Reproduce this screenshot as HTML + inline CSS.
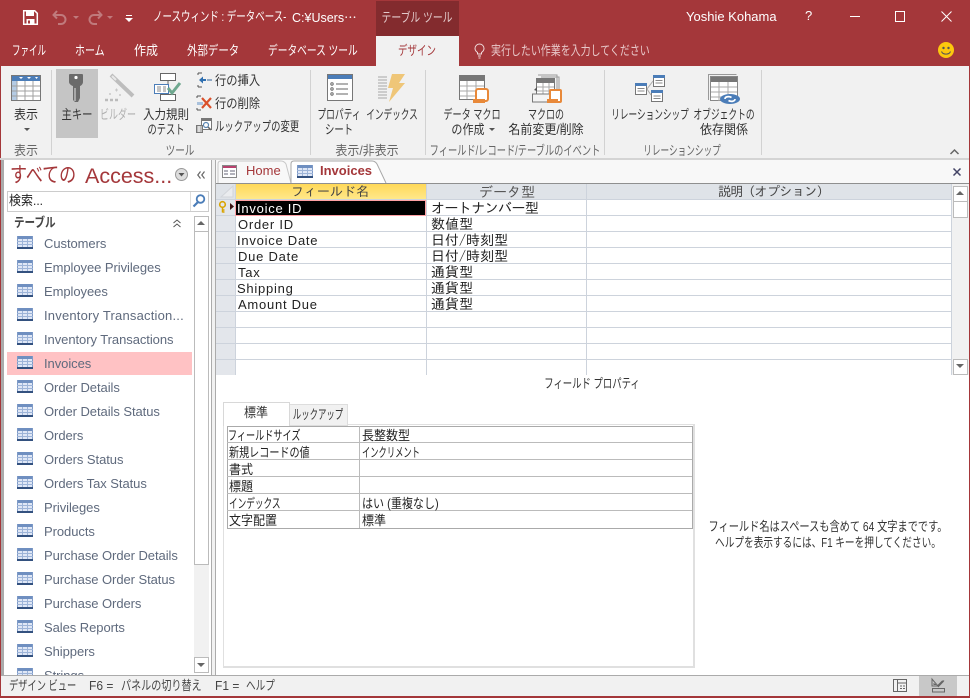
<!DOCTYPE html>
<html lang="ja"><head><meta charset="utf-8">
<style>
html,body{margin:0;padding:0}
body{width:970px;height:698px;position:relative;overflow:hidden;background:#f1f1f1;font-family:"Liberation Sans","Noto Sans CJK JP",sans-serif;font-size:13px;color:#444}
.a{position:absolute}
.t{position:absolute;white-space:nowrap;line-height:16px;transform:scaleX(calc(var(--s,1)*var(--f,.923)));transform-origin:0 0}
.c{text-align:center;transform:translateX(-50%) scaleX(calc(var(--s,1)*var(--f,.923)));transform-origin:50% 0}
.k{color:#333}
.w{color:#fff}
svg{position:absolute;overflow:visible}
.n{position:absolute;left:44px;font-size:13px;line-height:16px;color:#5f6a7d;white-space:nowrap;letter-spacing:-.06px}
.g{position:absolute;font-family:"Liberation Sans",sans-serif;font-size:13px;letter-spacing:.75px;line-height:16px;color:#222;white-space:nowrap}
.j{position:absolute;font-family:"IPAGothic",monospace;font-size:14px;line-height:16px;color:#222;white-space:nowrap}
.p{position:absolute;font-size:13px;line-height:17px;color:#222;white-space:nowrap;transform:scaleX(calc(var(--s,1)*.923));transform-origin:0 0}
.hl{position:absolute;height:1px;background:#cdd3dc}
.vl{position:absolute;width:1px;background:#cdd3dc}
</style></head><body>
<svg width="0" height="0" style="position:absolute"><defs>
<symbol id="tb" viewBox="0 0 16 13"><rect x="0" y="0" width="16" height="13" fill="#dfe7f6"/><rect x="0" y="0" width="16" height="3" fill="#6f8fc0"/><path d="M.5 0v13M15.500 0v13" stroke="#7f9bc8"/><path d="M0 5.500h16M0 8.500h16M5.500 3v8M10.500 3v8" stroke="#9db4d8" fill="none"/><rect x="0" y="11" width="16" height="2" fill="#33517f"/></symbol>
</defs></svg>

<!-- title bar -->
<div class="a" style="left:0;top:0;width:970px;height:66px;background:#a4373a"></div>
<div class="a" style="left:376px;top:1px;width:83px;height:35px;background:#832b2e"></div>
<div class="a" style="left:376px;top:36px;width:83px;height:30px;background:#f1f1f1"></div>
<svg style="left:23px;top:10px" width="15" height="15" viewBox="0 0 15 15"><path d="M.7.7h11l2.600 2.600v11H.7z" fill="none" stroke="#fff" stroke-width="1.500"/><rect x="3" y="1" width="8" height="5" fill="#fff"/><rect x="3.500" y="9" width="8" height="5" fill="#fff"/><rect x="5" y="10.500" width="2" height="3" fill="#a4373a"/></svg>
<svg style="left:52px;top:10px" width="16" height="15" viewBox="0 0 16 15"><path d="M5 1L1.500 5 5 8.500M2 5h7a4.500 4.500 0 0 1 0 9H6" fill="none" stroke="#c07a7c" stroke-width="2"/></svg>
<div class="a" style="left:73px;top:16px;border:3px solid transparent;border-top:3px solid #c07a7c"></div>
<svg style="left:87px;top:10px" width="16" height="15" viewBox="0 0 16 15"><path d="M11 1l3.500 4L11 8.500M14 5H7a4.500 4.500 0 0 0 0 9h3" fill="none" stroke="#c07a7c" stroke-width="2"/></svg>
<div class="a" style="left:107px;top:16px;border:3px solid transparent;border-top:3px solid #c07a7c"></div>
<div class="a" style="left:126px;top:15px;width:6px;height:1px;background:#fff"></div>
<div class="a" style="left:125px;top:18px;border:4px solid transparent;border-top:4px solid #fff;border-bottom:0"></div>
<div class="t w" style="left:153px;top:9px;--s:.79">ノースウィンド : データベース-</div>
<div class="t w" style="left:292px;top:9px;font-size:12.500px;--f:1">C:¥Users<span style="font-family:'Noto Sans CJK JP',sans-serif">…</span></div>
<div class="t c" style="left:417px;top:10px;color:#e2c9ca;--s:.82">テーブル ツール</div>
<div class="t w" style="left:686px;top:9px;font-size:13px;--f:1">Yoshie Kohama</div>
<div class="t w" style="left:805px;top:8px;font-size:13px;--f:1">?</div>
<div class="a" style="left:850px;top:16px;width:10px;height:1px;background:#fff"></div>
<div class="a" style="left:895px;top:11px;width:8px;height:9px;border:1px solid #fff"></div>
<svg style="left:941px;top:11px" width="11" height="11"><path d="M.5.500l10 10M10.500.500l-10 10" stroke="#fff" stroke-width="1"/></svg>

<!-- tabs -->
<div class="t w" style="left:12px;top:43px;--s:.71">ファイル</div>
<div class="t w" style="left:75px;top:43px;--s:.83">ホーム</div>
<div class="t w" style="left:134px;top:43px">作成</div>
<div class="t w" style="left:187px;top:43px;--s:.87">外部データ</div>
<div class="t w" style="left:268px;top:43px;--s:.81">データベース ツール</div>
<div class="t c" style="left:417px;top:43px;color:#a4373a;--s:.79">デザイン</div>
<svg style="left:474px;top:43px" width="11" height="16" viewBox="0 0 11 16"><path d="M3.500 11V9.500C1.500 8 1 7 1 5.500a4.500 4.500 0 0 1 9 0C10 7 9.500 8 7.500 9.500V11zM4 13h3M4.500 15h2" fill="none" stroke="#f0dcdc" stroke-width="1"/></svg>
<div class="t" style="left:491px;top:43px;color:#e8c8c9;--s:.83">実行したい作業を入力してください</div>
<svg style="left:938px;top:42px" width="16" height="16" viewBox="0 0 16 16"><circle cx="8" cy="8" r="8" fill="#fcc80e"/><circle cx="5.500" cy="6" r="1.200" fill="#555"/><circle cx="10.500" cy="6" r="1.200" fill="#555"/><path d="M3.500 9.500c1.500 3.500 7.500 3.500 9 0" fill="none" stroke="#555" stroke-width="1"/></svg>

<!-- ribbon -->
<div class="a" style="left:0;top:66px;width:1px;height:92px;background:#a4373a"></div>
<div class="a" style="left:0;top:158px;width:970px;height:2px;background:#d4d4d4"></div>
<div class="a" style="left:51px;top:70px;width:1px;height:85px;background:#d2d2d2"></div>
<div class="a" style="left:310px;top:70px;width:1px;height:85px;background:#d2d2d2"></div>
<div class="a" style="left:425px;top:70px;width:1px;height:85px;background:#d2d2d2"></div>
<div class="a" style="left:604px;top:70px;width:1px;height:85px;background:#d2d2d2"></div>
<div class="a" style="left:761px;top:70px;width:1px;height:85px;background:#d2d2d2"></div>
<div class="a" style="left:56px;top:69px;width:42px;height:69px;background:#c5c5c5"></div>

<svg style="left:11px;top:75px" width="30" height="26" viewBox="0 0 30 26"><rect x=".5" y=".5" width="29" height="25" fill="#fff" stroke="#777"/><rect x="1" y="1" width="28" height="5" fill="#4b7db8"/><rect x="1" y="6" width="5" height="19" fill="#b4cbe4"/><path d="M6 11h23M6 16h23M6 21h23M1 11h5M1 16h5M1 21h5M6 6v19M14 6v19M22 6v19" stroke="#a0a0a0" fill="none"/><path d="M8 2h4l-2 2zM16 2h4l-2 2zM24 2h3l-1.500 2z" fill="#fff"/></svg>
<div class="t c k" style="left:26px;top:107px">表示</div>
<div class="a" style="left:24px;top:128px;border:3px solid transparent;border-top:3px solid #555;border-bottom:0"></div>
<div class="t c" style="left:26px;top:143px;color:#666">表示</div>

<svg style="left:69px;top:74px" width="14" height="28" viewBox="0 0 14 28"><path d="M1 0h12a1 1 0 0 1 1 1v7c0 2-2 4-3 4v12l-2 4H6l-2-2V12C3 12 0 10 0 8V1a1 1 0 0 1 1-1z" fill="#6b6b6b"/><circle cx="7" cy="3.500" r="1.600" fill="#fff"/><path d="M6 14v13" stroke="#a8a8a8" stroke-width="2"/></svg>
<div class="t c k" style="left:77px;top:107px;--s:.86">主キー</div>

<svg style="left:105px;top:73px" width="30" height="29" viewBox="0 0 30 29"><path d="M6 2l22 21" stroke="#bdbdbd" stroke-width="4"/><path d="M7 3l4 4" stroke="#e8e8e8" stroke-width="2"/><path d="M10 17h3M11.500 15.500v3M4 21h2M5 20v2M14 22h2M15 21v2" stroke="#c8c8c8"/><path d="M0 27h3M5 27h3M10 27h3" stroke="#bbb" stroke-width="2.500"/></svg>
<div class="t c" style="left:118px;top:107px;color:#b0b0b0;--s:.75">ビルダー</div>

<svg style="left:154px;top:73px" width="29" height="29" viewBox="0 0 29 29"><rect x="6.500" y=".5" width="15" height="7" fill="#fff" stroke="#666"/><rect x="6.500" y="21.500" width="15" height="6" fill="#fff" stroke="#666"/><path d="M14 8v3M14 19v3" stroke="#666"/><rect x=".5" y="11.500" width="14" height="9" fill="#fff" stroke="#4b7db8"/><path d="M3 14h4M3 16h4M3 18h4M9 14h3M9 16h3M9 18h3" stroke="#888" fill="none"/><path d="M14 15l4 5 8-10" stroke="#6fa88f" stroke-width="3" fill="none"/></svg>
<div class="t c k" style="left:166px;top:107px;--s:.96">入力規則</div>
<div class="t c k" style="left:166px;top:122px;--s:.77">のテスト</div>

<svg style="left:197px;top:72px" width="15" height="17" viewBox="0 0 15 17"><path d="M1 1h4M1 1v2M1 15h4M1 13v2" stroke="#555" fill="none"/><path d="M2 8l4-3.500V7h3v2H6v2.500z" fill="#2f6fb0"/><rect x="10" y="7" width="5" height="2" fill="#8fa9c6"/></svg>
<div class="t k" style="left:215px;top:73px;--s:.94">行の挿入</div>
<svg style="left:196px;top:95px" width="16" height="17" viewBox="0 0 16 17"><path d="M1 1h4M1 1v2M1 15h4M1 13v2" stroke="#555" fill="none"/><rect x="1" y="7" width="6" height="3" fill="#a9c1dc"/><path d="M6 3l9 10M15 3L6 13" stroke="#d9512c" stroke-width="2.200"/></svg>
<div class="t k" style="left:215px;top:96px;--s:.94">行の削除</div>
<svg style="left:196px;top:118px" width="17" height="16" viewBox="0 0 17 16"><rect x="5.500" y=".5" width="10" height="11" fill="#fff" stroke="#777"/><rect x="6" y="1" width="9" height="2" fill="#777"/><rect x="0" y="7" width="7" height="8" fill="#777"/><path d="M1 9h5M1 11h5M1 13h5M3 8v6" stroke="#fff" fill="none"/><circle cx="10" cy="7" r="2.500" fill="#fff" stroke="#5b87b3" stroke-width="1.200"/><path d="M12 9l3 3" stroke="#666" stroke-width="1.500"/></svg>
<div class="t k" style="left:215px;top:119px;--s:.78">ルックアップの変更</div>
<div class="t c" style="left:180px;top:143px;color:#666;--s:.8">ツール</div>

<svg style="left:327px;top:74px" width="26" height="27" viewBox="0 0 26 27"><rect x=".5" y=".5" width="25" height="26" fill="#fff" stroke="#777"/><rect x="1" y="1" width="24" height="4" fill="#4b7db8"/><path d="M9 10h12M9 15h12M9 20h12" stroke="#666" fill="none"/><circle cx="5" cy="10" r="1.200" fill="none" stroke="#666"/><circle cx="5" cy="15" r="1.200" fill="none" stroke="#666"/><circle cx="5" cy="20" r="1.200" fill="none" stroke="#666"/></svg>
<div class="t c k" style="left:339px;top:107px;--s:.73">プロパティ</div>
<div class="t c k" style="left:339px;top:122px;--s:.78">シート</div>
<svg style="left:378px;top:74px" width="28" height="28" viewBox="0 0 28 28"><path d="M0 3h9M0 6h9M0 9h9M0 12h9M0 15h9M0 18h9M0 21h9M0 24h9" stroke="#a8a8a8" fill="none"/><path d="M14 0h13l-6 9h6L11 28l4-14h-5z" fill="#efc678"/></svg>
<div class="t c k" style="left:392px;top:107px;--s:.72">インデックス</div>
<div class="t c" style="left:367px;top:143px;color:#666">表示/非表示</div>

<svg style="left:459px;top:75px" width="30" height="29" viewBox="0 0 30 29"><rect x=".5" y=".5" width="25" height="24" fill="#fff" stroke="#777"/><rect x="1" y="1" width="24" height="5" fill="#777"/><path d="M1 11h24M1 16h24M1 21h24M8 6v18M17 6v18" stroke="#aaa" fill="none"/><rect x="17" y="14" width="12" height="12" rx="2" fill="#fff" stroke="#e8893a" stroke-width="2"/><rect x="14" y="24" width="12" height="4" fill="#e8893a"/></svg>
<div class="t c k" style="left:472px;top:107px;--s:.76">データ マクロ</div>
<div class="t c k" style="left:468px;top:122px;--s:.92">の作成</div>
<div class="a" style="left:489px;top:128px;border:3px solid transparent;border-top:3px solid #555;border-bottom:0"></div>
<svg style="left:532px;top:74px" width="31" height="30" viewBox="0 0 31 30"><path d="M6 1h19v22M9 3h18v20" fill="none" stroke="#999"/><rect x="4.500" y="4.500" width="18" height="17" fill="#fff" stroke="#777"/><rect x="5" y="5" width="17" height="4" fill="#777"/><path d="M5 13h17M5 17h17M11 9v12M17 9v12" stroke="#aaa" fill="none"/><path d="M.5 20h20v8H.5z" fill="#f4f4f4" stroke="#777"/><path d="M2 16l3-3v4z" fill="#555"/><rect x="18" y="16" width="11" height="12" rx="1" fill="#fff" stroke="#e8893a" stroke-width="2"/><rect x="15" y="25" width="11" height="4" fill="#e8893a"/></svg>
<div class="t c k" style="left:546px;top:107px;--s:.75">マクロの</div>
<div class="t c k" style="left:545.500px;top:122px">名前変更/削除</div>
<div class="t c" style="left:515px;top:143px;color:#666;--s:.77">フィールド/レコード/テーブルのイベント</div>

<svg style="left:635px;top:75px" width="30" height="28" viewBox="0 0 30 28"><g fill="#fff" stroke="#777"><rect x=".5" y="8.500" width="11" height="11"/><rect x="18.500" y=".5" width="11" height="11"/><rect x="16.500" y="15.500" width="11" height="11"/></g><rect x="0" y="8" width="12" height="3" fill="#4b7db8"/><rect x="18" y="0" width="12" height="3" fill="#4b7db8"/><rect x="16" y="15" width="12" height="3" fill="#4b7db8"/><path d="M12 14l6-8M12 14l4 6" stroke="#aaa" fill="none"/><path d="M2.500 13.500h7M2.500 16h7M20.500 5.500h7M20.500 8h7M18.500 21h7M18.500 23.500h7" stroke="#888" fill="none"/></svg>
<div class="t c k" style="left:650px;top:107px;--s:.72">リレーションシップ</div>
<svg style="left:708px;top:74px" width="32" height="30" viewBox="0 0 32 30"><path d="M.5 26V.5h28" fill="none" stroke="#999"/><rect x="2.500" y="2.500" width="27" height="24" fill="#fff" stroke="#888"/><rect x="3" y="3" width="26" height="5" fill="#777"/><path d="M3 13h26M3 18h26M3 23h26M11 8v19M20 8v19" stroke="#aaa" fill="none"/><ellipse cx="22" cy="25" rx="10" ry="5" fill="#4b7db8"/><path d="M17 25c0-2.500 4-3 6.500-1.500M27 25c0 2.500-4 3-6.500 1.500" stroke="#fff" stroke-width="1.700" fill="none"/></svg>
<div class="t c k" style="left:724px;top:107px;--s:.73">オブジェクトの</div>
<div class="t c k" style="left:724px;top:122px">依存関係</div>
<div class="t c" style="left:682px;top:143px;color:#666;--s:.72">リレーションシップ</div>
<svg style="left:950px;top:149px" width="9" height="6"><path d="M.5 5l4-4 4 4" stroke="#666" stroke-width="1.500" fill="none"/></svg>

<!-- nav pane -->
<div class="a" style="left:0;top:160px;width:1px;height:538px;background:#a4373a"></div>
<div class="a" style="left:969px;top:0;width:1px;height:698px;background:#a4373a"></div>
<div class="a" style="left:1px;top:160px;width:3px;height:515px;background:#ababab"></div>
<div class="a" style="left:4px;top:160px;width:207px;height:515px;background:#fff"></div>
<div class="a" style="left:211px;top:160px;width:1px;height:515px;background:#ababab"></div>
<div class="a" style="left:212px;top:160px;width:3px;height:515px;background:#f1f1f1"></div>
<div class="a" style="left:215px;top:160px;width:1px;height:515px;background:#ababab"></div>
<div class="t" style="left:10px;top:164px;font-size:21px;line-height:24px;color:#a4373a;--s:.81;--f:1">すべての</div>
<div class="t" style="left:85px;top:164px;font-size:21.500px;line-height:24px;color:#a4373a;--f:1">Access...</div>
<svg style="left:175px;top:168px" width="13" height="13"><circle cx="6.500" cy="6.500" r="6" fill="#ddd" stroke="#999"/><path d="M3.500 5h6l-3 3.500z" fill="#555"/></svg>
<svg style="left:197px;top:171px" width="8" height="8"><path d="M3.500.5L.8 4l2.700 3.500M7.500.5L4.800 4l2.700 3.500" stroke="#666" stroke-width="1.200" fill="none"/></svg>
<div class="a" style="left:7px;top:191px;width:200px;height:19px;border:1px solid #ccc;background:#fff"></div>
<div class="a" style="left:190px;top:192px;width:1px;height:19px;background:#ddd"></div>
<div class="t" style="left:9px;top:193px;color:#222">検索...</div>
<svg style="left:192px;top:194px" width="14" height="14"><circle cx="8.500" cy="5" r="3.800" fill="none" stroke="#4b7db8" stroke-width="1.800"/><path d="M6 8L1.500 12.500" stroke="#4b7db8" stroke-width="2.200"/></svg>
<div class="t" style="left:14px;top:215px;font-weight:bold;color:#444;--s:.88">テーブル</div>
<svg style="left:173px;top:219px" width="8" height="9"><path d="M.5 4L4 1l3.500 3M.5 8L4 5l3.500 3" stroke="#555" fill="none"/></svg>

<div class="a" style="left:7px;top:352px;width:185px;height:23px;background:#ffc2c4"></div>
<svg style="left:17px;top:236px" width="16" height="13"><use href="#tb"/></svg><div class="n" style="top:236px">Customers</div>
<svg style="left:17px;top:260px" width="16" height="13"><use href="#tb"/></svg><div class="n" style="top:260px">Employee Privileges</div>
<svg style="left:17px;top:284px" width="16" height="13"><use href="#tb"/></svg><div class="n" style="top:284px">Employees</div>
<svg style="left:17px;top:308px" width="16" height="13"><use href="#tb"/></svg><div class="n" style="top:308px;letter-spacing:.2px">Inventory Transaction...</div>
<svg style="left:17px;top:332px" width="16" height="13"><use href="#tb"/></svg><div class="n" style="top:332px">Inventory Transactions</div>
<svg style="left:17px;top:356px" width="16" height="13"><use href="#tb"/></svg><div class="n" style="top:356px">Invoices</div>
<svg style="left:17px;top:380px" width="16" height="13"><use href="#tb"/></svg><div class="n" style="top:380px">Order Details</div>
<svg style="left:17px;top:404px" width="16" height="13"><use href="#tb"/></svg><div class="n" style="top:404px">Order Details Status</div>
<svg style="left:17px;top:428px" width="16" height="13"><use href="#tb"/></svg><div class="n" style="top:428px">Orders</div>
<svg style="left:17px;top:452px" width="16" height="13"><use href="#tb"/></svg><div class="n" style="top:452px">Orders Status</div>
<svg style="left:17px;top:476px" width="16" height="13"><use href="#tb"/></svg><div class="n" style="top:476px">Orders Tax Status</div>
<svg style="left:17px;top:500px" width="16" height="13"><use href="#tb"/></svg><div class="n" style="top:500px">Privileges</div>
<svg style="left:17px;top:524px" width="16" height="13"><use href="#tb"/></svg><div class="n" style="top:524px">Products</div>
<svg style="left:17px;top:548px" width="16" height="13"><use href="#tb"/></svg><div class="n" style="top:548px">Purchase Order Details</div>
<svg style="left:17px;top:572px" width="16" height="13"><use href="#tb"/></svg><div class="n" style="top:572px">Purchase Order Status</div>
<svg style="left:17px;top:596px" width="16" height="13"><use href="#tb"/></svg><div class="n" style="top:596px">Purchase Orders</div>
<svg style="left:17px;top:620px" width="16" height="13"><use href="#tb"/></svg><div class="n" style="top:620px">Sales Reports</div>
<svg style="left:17px;top:644px" width="16" height="13"><use href="#tb"/></svg><div class="n" style="top:644px">Shippers</div>
<div class="a" style="left:4px;top:668px;width:190px;height:7px;overflow:hidden"><svg style="left:13px;top:0" width="16" height="13"><use href="#tb"/></svg><div class="n" style="left:40px;top:0">Strings</div></div>
<!-- nav scrollbar -->
<div class="a" style="left:194px;top:216px;width:15px;height:457px;background:#f1f1f1"></div>
<div class="a" style="left:194px;top:216px;width:13px;height:14px;border:1px solid #bbb;background:#fff"></div>
<div class="a" style="left:197px;top:221px;border:4px solid transparent;border-bottom:4px solid #666;border-top:0"></div>
<div class="a" style="left:194px;top:231px;width:13px;height:332px;border:1px solid #bbb;background:#fff"></div>
<div class="a" style="left:194px;top:657px;width:13px;height:14px;border:1px solid #bbb;background:#fff"></div>
<div class="a" style="left:197px;top:663px;border:4px solid transparent;border-top:4px solid #666;border-bottom:0"></div>

<!-- main -->
<div class="a" style="left:216px;top:160px;width:753px;height:23px;background:#f8f8f8"></div>
<div class="a" style="left:216px;top:183px;width:753px;height:492px;background:#fff"></div>
<svg style="left:216px;top:160px" width="175" height="24"><path d="M2 23V4q0-3 3-3h60q3 0 5 3l5 19" fill="#f8f8f8" stroke="#c8c8c8"/><path d="M75 23V4q0-3 3-3h78q3 0 5 3l9 19" fill="#fff" stroke="#a8a8a8"/></svg>
<svg style="left:222px;top:165px" width="15" height="13" viewBox="0 0 15 13"><rect x=".5" y=".5" width="14" height="12" fill="#fff" stroke="#888"/><rect x="1" y="1" width="13" height="2" fill="#b8416e"/><path d="M2 6h4M2 9h4M8 6h5M8 9h5" stroke="#667" fill="none"/></svg>
<div class="t" style="left:246px;top:163px;font-size:13px;color:#a4373a;--f:1">Home</div>
<svg style="left:297px;top:165px" width="16" height="13"><use href="#tb"/></svg>
<div class="t" style="left:320px;top:163px;font-size:13px;font-weight:bold;color:#a4373a;--f:1">Invoices</div>
<svg style="left:953px;top:168px" width="8" height="8"><path d="M.5.500l7 7M7.500.500l-7 7" stroke="#444466" stroke-width="1.500"/></svg>
<div class="a" style="left:216px;top:183px;width:753px;height:1px;background:#8f8f8f"></div>

<!-- grid -->
<div class="a" style="left:216px;top:184px;width:736px;height:15px;background:#dfe3e8"></div>
<div class="a" style="left:236px;top:184px;width:190px;height:15px;background:linear-gradient(#ffd858,#ffe88a)"></div>
<div class="a" style="left:216px;top:199px;width:19px;height:176px;background:#e3e6eb"></div>
<svg style="left:220px;top:185px" width="14" height="13"><path d="M1 12L13 1v11z" fill="#eaecef" stroke="#d2d5da"/></svg>
<div class="j" style="left:291px;top:184px;font-size:13px;color:#444">フィールド名</div>
<div class="j" style="left:479px;top:184px;color:#555">データ型</div>
<div class="j" style="left:718px;top:184px;font-size:13px;letter-spacing:-.6px;color:#444">説明 (オプション)</div>
<div class="hl" style="left:216px;top:199px;width:736px"></div>
<div class="hl" style="left:216px;top:215px;width:736px"></div>
<div class="hl" style="left:216px;top:231px;width:736px"></div>
<div class="hl" style="left:216px;top:247px;width:736px"></div>
<div class="hl" style="left:216px;top:263px;width:736px"></div>
<div class="hl" style="left:216px;top:279px;width:736px"></div>
<div class="hl" style="left:216px;top:295px;width:736px"></div>
<div class="hl" style="left:216px;top:311px;width:736px"></div>
<div class="hl" style="left:216px;top:327px;width:736px"></div>
<div class="hl" style="left:216px;top:343px;width:736px"></div>
<div class="hl" style="left:216px;top:359px;width:736px"></div>
<div class="vl" style="left:235px;top:184px;height:191px"></div>
<div class="vl" style="left:426px;top:184px;height:191px"></div>
<div class="vl" style="left:586px;top:184px;height:191px"></div>
<div class="vl" style="left:951px;top:184px;height:191px"></div>
<div class="a" style="left:235px;top:200px;width:189px;height:14px;background:#000;border:1px solid #ffa0a4"></div>
<svg style="left:218px;top:201px" width="16" height="12"><circle cx="4.500" cy="3.500" r="2.800" fill="none" stroke="#d9a400" stroke-width="1.600"/><path d="M4.500 6.500v5M4.500 9h2M4.500 11h2" stroke="#d9a400" stroke-width="1.500"/><path d="M12 2l4 3.500L12 9z" fill="#3a1010"/></svg>
<div class="g" style="left:237px;top:201px;color:#fff">Invoice ID</div>
<div class="g" style="left:238px;top:217px">Order ID</div>
<div class="g" style="left:237px;top:233px">Invoice Date</div>
<div class="g" style="left:238px;top:249px">Due Date</div>
<div class="g" style="left:238px;top:265px">Tax</div>
<div class="g" style="left:237px;top:281px">Shipping</div>
<div class="g" style="left:238px;top:297px">Amount Due</div>
<div class="j" style="left:431px;top:200px;letter-spacing:-.6px">オートナンバー型</div>
<div class="j" style="left:431px;top:216px">数値型</div>
<div class="j" style="left:431px;top:232px">日付/時刻型</div>
<div class="j" style="left:431px;top:248px">日付/時刻型</div>
<div class="j" style="left:431px;top:264px">通貨型</div>
<div class="j" style="left:431px;top:280px">通貨型</div>
<div class="j" style="left:431px;top:296px">通貨型</div>
<!-- grid scrollbar -->
<div class="a" style="left:952px;top:184px;width:17px;height:191px;background:#f1f1f1"></div>
<div class="a" style="left:953px;top:186px;width:13px;height:14px;border:1px solid #bbb;background:#fff"></div>
<div class="a" style="left:956px;top:191px;border:4px solid transparent;border-bottom:4px solid #666;border-top:0"></div>
<div class="a" style="left:953px;top:201px;width:13px;height:15px;border:1px solid #bbb;background:#fff"></div>
<div class="a" style="left:953px;top:359px;width:13px;height:14px;border:1px solid #bbb;background:#fff"></div>
<div class="a" style="left:956px;top:364px;border:4px solid transparent;border-top:4px solid #666;border-bottom:0"></div>

<!-- properties -->
<div class="t c k" style="left:592px;top:376px;--s:.78">フィールド プロパティ</div>
<div class="a" style="left:223px;top:424px;width:469px;height:241px;border:1px solid #e0e0e0;border-right-width:2px;border-bottom-width:2px;background:#fff"></div>
<div class="a" style="left:289px;top:404px;width:57px;height:20px;border:1px solid #ddd;background:#f1f1f1"></div>
<div class="a" style="left:223px;top:402px;width:65px;height:23px;border:1px solid #d8d8d8;border-bottom:0;background:#fff"></div>
<div class="t c k" style="left:256px;top:405px">標準</div>
<div class="t c k" style="left:318px;top:407px;--s:.7">ルックアップ</div>
<div class="a" style="left:227px;top:426px;width:464px;height:101px;border:1px solid #aaa;background:#fff"></div>
<div class="a" style="left:359px;top:426px;width:1px;height:102px;background:#bbb"></div>
<div class="a" style="left:227px;top:442px;width:465px;height:1px;background:#bbb"></div>
<div class="a" style="left:227px;top:459px;width:465px;height:1px;background:#bbb"></div>
<div class="a" style="left:227px;top:476px;width:465px;height:1px;background:#bbb"></div>
<div class="a" style="left:227px;top:493px;width:465px;height:1px;background:#bbb"></div>
<div class="a" style="left:227px;top:510px;width:465px;height:1px;background:#bbb"></div>
<div class="p" style="left:228px;top:427px;--s:.76">フィールドサイズ</div>
<div class="p" style="left:229px;top:444px;--s:.84">新規レコードの値</div>
<div class="p" style="left:229px;top:461px">書式</div>
<div class="p" style="left:229px;top:478px">標題</div>
<div class="p" style="left:229px;top:495px;--s:.72">インデックス</div>
<div class="p" style="left:229px;top:512px">文字配置</div>
<div class="p" style="left:362px;top:427px">長整数型</div>
<div class="p" style="left:362px;top:444px;--s:.69">インクリメント</div>
<div class="p" style="left:362px;top:495px;--s:.92">はい (重複なし)</div>
<div class="p" style="left:362px;top:512px">標準</div>
<div class="t c k" style="left:828px;top:519px;--s:.85">フィールド名はスペースも含めて 64 文字までです。</div>
<div class="t c k" style="left:828px;top:535px;--s:.805">ヘルプを表示するには、F1 キーを押してください。</div>

<!-- status -->
<div class="a" style="left:1px;top:675px;width:968px;height:1px;background:#ababab"></div>
<div class="a" style="left:1px;top:676px;width:968px;height:20px;background:#f1f1f1"></div>
<div class="a" style="left:0;top:696px;width:970px;height:2px;background:#a4373a"></div>
<div class="t" style="left:9px;top:678px;--s:.77">デザイン ビュー</div>
<div class="t" style="left:89px;top:678px">F6 =</div>
<div class="t" style="left:121px;top:678px;--s:.84">パネルの切り替え</div>
<div class="t" style="left:215px;top:678px">F1 =</div>
<div class="t" style="left:246px;top:678px;--s:.8">ヘルプ</div>
<div class="a" style="left:919px;top:676px;width:38px;height:20px;background:#c8c8c8"></div>
<svg style="left:893px;top:679px" width="14" height="13" viewBox="0 0 14 13"><rect x=".5" y=".5" width="13" height="12" fill="none" stroke="#666"/><path d="M4.500 1v11M5 4h8M7 7h2M10 7h2M7 9.500h2M10 9.500h2" stroke="#666" fill="none"/></svg>
<svg style="left:931px;top:678px" width="15" height="15" viewBox="0 0 15 15"><rect x="1.500" y="10.500" width="12" height="3.500" fill="none" stroke="#666"/><path d="M1 1v7h6zM3 5v1.500h2M7 9l6-6.500" fill="none" stroke="#666"/><path d="M7 8l5-5" stroke="#666" stroke-width="2"/></svg>
</body></html>
